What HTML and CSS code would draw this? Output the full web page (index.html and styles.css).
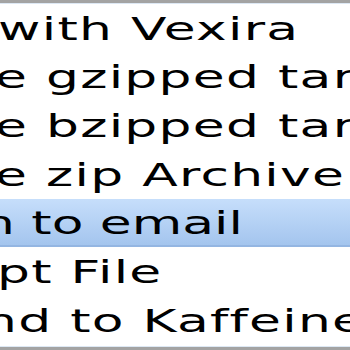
FILE: index.html
```html
<!DOCTYPE html>
<html>
<head>
<meta charset="utf-8">
<link rel="stylesheet" href="styles.css">
</head>
<body>
<div class="menu">
  <div class="item"><span class="label off-w">with Vexira</span></div>
  <div class="item"><span class="label off-e">e gzipped tar</span></div>
  <div class="item"><span class="label off-e">e bzipped tar</span></div>
  <div class="item"><span class="label off-e">e zip Archive</span></div>
  <div class="item active"><span class="label tight off-n">n to email</span></div>
  <div class="item"><span class="label off-p">pt File</span></div>
  <div class="item"><span class="label off-nd">nd to Kaffeine</span></div>
</div>
</body>
</html>
```
FILE: styles.css
```css
html, body {
  margin: 0;
  padding: 0;
  background: #ffffff;
}
.menu {
  width: 350px;
  height: 350px;
  overflow: hidden;
  box-sizing: border-box;
  border-top: 3px solid #a3a3a3;
  border-bottom: 3px solid #a3a3a3;
  display: flex;
  flex-direction: column;
  background: #ffffff;
}
.menu::before {
  content: "";
  display: block;
  height: 1px;
  flex: none;
  background: #dde8f4;
}
.menu::after {
  content: "";
  display: block;
  height: 1px;
  flex: none;
  margin-top: auto;
  background: #dde8f4;
}
.item {
  flex: none;
  height: 48.7px;
  line-height: 48.7px;
  padding-top: 0.6px;
  box-sizing: border-box;
  white-space: nowrap;
}
.item.active {
  background: linear-gradient(#c6defb, #a4c5ee);
  border-bottom: 2px solid #94b6e2;
}
.label {
  display: inline-block;
  font-family: "DejaVu Sans", sans-serif;
  font-size: 32px;
  letter-spacing: 0.8px;
  color: #000;
  transform: scaleX(1.62);
  transform-origin: left center;
}
.label.tight {
  letter-spacing: 0px;
}
.off-w { margin-left: -2px; }
.off-e { margin-left: -5px; }
.off-n { margin-left: -18px; }
.off-p { margin-left: -3px; }
.off-nd { margin-left: -16px; }
```
